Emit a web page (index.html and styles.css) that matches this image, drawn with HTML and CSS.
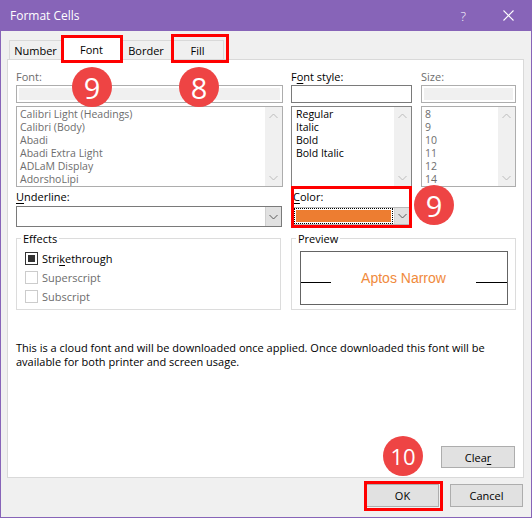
FILE: index.html
```html
<!DOCTYPE html>
<html>
<head>
<meta charset="utf-8">
<title>Format Cells</title>
<link rel="stylesheet" href="styles.css">
</head>
<body>
<div class="window">
  <div class="titlebar">
    <span class="title">Format Cells</span>
    <span class="tb-btns">
      <span class="help">?</span>
      <svg class="close" width="11" height="11" viewBox="0 0 11 11"><path d="M0.5 0.5 L10.5 10.5 M10.5 0.5 L0.5 10.5" stroke="#fff" stroke-width="1.1" fill="none"/></svg>
    </span>
  </div>
  <div class="client">
    <div class="tabs">
      <div class="tab t-number">Number</div>
      <div class="tab t-font active">Font</div>
      <div class="tab t-border">Border</div>
      <div class="tab t-fill">Fill</div>
    </div>
    <div class="panel">
      <div class="row row1">
        <div class="c-font">
          <div class="lbl dis">Font:</div>
          <div class="input dis"><div class="input-fill"></div></div>
          <div class="list dis">
            <div class="items">
              <div>Calibri Light (Headings)</div>
              <div>Calibri (Body)</div>
              <div>Abadi</div>
              <div>Abadi Extra Light</div>
              <div>ADLaM Display</div>
              <div>AdorshoLipi</div>
            </div>
            <div class="sb">
              <span class="arr"><svg width="9" height="6" viewBox="0 0 9 6"><path d="M0.5 5 L4.5 1 L8.5 5" stroke="currentColor" fill="none"/></svg></span>
              <span class="arr"><svg width="9" height="6" viewBox="0 0 9 6"><path d="M0.5 1 L4.5 5 L8.5 1" stroke="currentColor" fill="none"/></svg></span>
            </div>
          </div>
        </div>
        <div class="c-style">
          <div class="lbl">F<u>o</u>nt style:</div>
          <div class="input"></div>
          <div class="list">
            <div class="items">
              <div>Regular</div>
              <div>Italic</div>
              <div>Bold</div>
              <div>Bold Italic</div>
            </div>
            <div class="sb">
              <span class="arr"><svg width="9" height="6" viewBox="0 0 9 6"><path d="M0.5 5 L4.5 1 L8.5 5" stroke="currentColor" fill="none"/></svg></span>
              <span class="arr"><svg width="9" height="6" viewBox="0 0 9 6"><path d="M0.5 1 L4.5 5 L8.5 1" stroke="currentColor" fill="none"/></svg></span>
            </div>
          </div>
        </div>
        <div class="c-size">
          <div class="lbl dis">Size:</div>
          <div class="input dis"><div class="input-fill"></div></div>
          <div class="list dis">
            <div class="items">
              <div>8</div>
              <div>9</div>
              <div>10</div>
              <div>11</div>
              <div>12</div>
              <div>14</div>
            </div>
            <div class="sb">
              <span class="arr"><svg width="9" height="6" viewBox="0 0 9 6"><path d="M0.5 5 L4.5 1 L8.5 5" stroke="currentColor" fill="none"/></svg></span>
              <span class="arr"><svg width="9" height="6" viewBox="0 0 9 6"><path d="M0.5 1 L4.5 5 L8.5 1" stroke="currentColor" fill="none"/></svg></span>
            </div>
          </div>
        </div>
      </div>

      <div class="row row2">
        <div class="c-under">
          <div class="lbl"><u>U</u>nderline:</div>
          <div class="combo">
            <div class="combo-val"></div>
            <div class="dd"><svg width="9" height="6" viewBox="0 0 9 6"><path d="M0.5 1 L4.5 5 L8.5 1" stroke="currentColor" fill="none"/></svg></div>
          </div>
        </div>
        <div class="c-color">
          <div class="lbl"><u>C</u>olor:</div>
          <div class="combo color-combo">
            <div class="swatch-wrap"><div class="swatch"></div></div>
            <div class="dd"><svg width="9" height="6" viewBox="0 0 9 6"><path d="M0.5 1 L4.5 5 L8.5 1" stroke="currentColor" fill="none"/></svg></div>
          </div>
        </div>
      </div>

      <div class="row row3">
        <div class="group g-effects">
          <div class="g-title">Effects</div>
          <div class="checks">
            <div class="chk-row"><span class="chk on"><span class="mark"></span></span><span>Stri<u>k</u>ethrough</span></div>
            <div class="chk-row dis"><span class="chk"></span><span>Superscript</span></div>
            <div class="chk-row dis"><span class="chk"></span><span>Subscript</span></div>
          </div>
        </div>
        <div class="group g-preview">
          <div class="g-title">Preview</div>
          <div class="pv-box">
            <div class="pv-line"></div>
            <div class="pv-text">Aptos Narrow</div>
            <div class="pv-line"></div>
          </div>
        </div>
      </div>

      <p class="notice">This is a cloud font and will be downloaded once applied. Once downloaded this font will be<br>available for both printer and screen usage.</p>

      <div class="clear-row"><button class="btn btn-clear">Clea<u>r</u></button></div>
    </div>
    <div class="footer">
      <button class="btn">OK</button>
      <button class="btn">Cancel</button>
    </div>
  </div>

  <div class="ann box box-font"></div>
  <div class="ann box box-fill"></div>
  <div class="ann box box-color"></div>
  <div class="ann box box-ok"></div>
  <div class="ann num n1">9</div>
  <div class="ann num n2">8</div>
  <div class="ann num n3">9</div>
  <div class="ann num n4">10</div>
</div>
</body>
</html>
```

FILE: styles.css
```css
* { box-sizing: border-box; }
html, body { margin: 0; padding: 0; }
body {
  width: 532px;
  height: 518px;
  overflow: hidden;
  font-family: "Open Sans", "Noto Sans", sans-serif;
  font-size: 11px;
  color: #000;
  background: #f0f0f0;
}
u { text-decoration: underline; text-underline-offset: 2px; }

.window {
  position: relative;
  width: 532px;
  height: 518px;
  border: 1px solid #8764b8;
  border-top: 0;
  background: #f0f0f0;
  display: flex;
  flex-direction: column;
}

.titlebar {
  height: 31px;
  flex: none;
  background: #8764b8;
  color: #fff;
  display: flex;
  align-items: center;
  padding: 0 17px 0 9px;
}
.title { font-size: 12px; }
.tb-btns { margin-left: auto; display: flex; align-items: center; }
.help { font-size: 13px; margin-right: 37px; font-weight: 300; }
.close { display: block; }

.client {
  flex: 1;
  display: flex;
  flex-direction: column;
  padding: 5px 7px 0 6px;
}

.tabs {
  height: 23px;
  display: flex;
  align-items: flex-end;
  padding-left: 2px;
}
.tab {
  height: 19px;
  padding-top: 2px;
  line-height: 15px;
  text-align: center;
  border: 1px solid #d9d9d9;
  border-bottom: 0;
  background: #f0f0f0;
}
.tab + .tab { border-left: 0; }
.t-number { width: 53px; }
.t-font { width: 59px; }
.t-border { width: 51px; }
.t-fill { width: 52px; }
.tab.active {
  position: relative;
  z-index: 1;
  height: 24px;
  margin-bottom: -1px;
  padding-top: 5px;
  background: #fff;
  border-left: 1px solid #d9d9d9;
}
.tab.active + .tab { border-left: 0; }

.panel {
  flex: none;
  height: 419px;
  background: #fff;
  border: 1px solid #d9d9d9;
  padding: 9px 7px 9px 8px;
  display: flex;
  flex-direction: column;
}

.row { display: flex; }
.lbl { height: 15px; line-height: 15px; white-space: nowrap; }
.dis { color: #6d6d6d; }

.c-font { width: 267px; }
.c-style { width: 121px; margin-left: 8px; }
.c-size { width: 95px; margin-left: 9px; }

.input {
  height: 18px;
  margin-top: 1px;
  border: 1px solid #7a7a7a;
  background: #fff;
}
.input.dis { border-color: #adadad; padding: 2px; }
.input-fill { height: 100%; background: #f0f0f0; }

.list {
  height: 81px;
  margin-top: 3px;
  border: 1px solid #828282;
  display: flex;
  font-size: 10.5px;
  line-height: 13px;
}
.list.dis { border-color: #adadad; }
.items { flex: 1; padding: 1px 0 0 3px; white-space: nowrap; overflow: hidden; }
.c-style .items { padding-left: 4px; }
.sb {
  width: 17px;
  background: #f0f0f0;
  display: flex;
  flex-direction: column;
  justify-content: space-between;
  color: #bcbcbc;
}
.arr {
  height: 17px;
  display: flex;
  align-items: center;
  justify-content: center;
}
.arr svg { display: block; }

.row2 { margin-top: 2px; }
.c-under { width: 266px; }
.c-color { width: 119px; margin-left: 9px; padding-left: 2px; }
.combo {
  margin-top: 2px;
  height: 21px;
  border: 1px solid #7a7a7a;
  background: #fff;
  display: flex;
}
.combo-val { flex: 1; }
.dd {
  width: 16px;
  background: #e1e1e1;
  border-left: 1px solid #cfcfcf;
  display: flex;
  align-items: center;
  justify-content: center;
  color: #5a5a5a;
}
.dd svg { display: block; }
.color-combo {
  margin-top: 3px;
  height: 18px;
  border-color: #b9b9b9;
}
.swatch-wrap {
  flex: 1;
  border: 1px dotted #000;
  padding: 1px;
  margin-right: 1px;
}
.swatch { height: 100%; background: #ed7d31; }
.color-combo .dd { width: 15px; border-left: 1px solid #d4d4d4; }

.row3 { margin-top: 11px; }
.group {
  height: 72px;
  border: 1px solid #dcdcdc;
}
.g-effects { width: 265px; }
.g-preview { width: 225px; margin-left: 10px; }
.g-title {
  margin: -8px 0 0 4px;
  width: max-content;
  padding: 0 2px;
  background: #fff;
  height: 15px;
  line-height: 15px;
}
.checks { margin-top: 3px; padding-left: 8px; }
.chk-row { height: 19px; display: flex; align-items: center; }
.chk-row.dis { color: #6d6d6d; }
.chk {
  width: 13px;
  height: 13px;
  border: 1px solid #cccccc;
  margin-right: 4px;
  display: flex;
  align-items: center;
  justify-content: center;
  background: #fff;
}
.chk.on { border-color: #333; }
.mark { width: 7px; height: 7px; background: #333; }

.pv-box {
  margin: 5px 7px 0 8px;
  height: 54px;
  border: 1px solid #646464;
  display: grid;
  grid-template-columns: 30px 1fr 31px;
  align-items: start;
}
.pv-line { height: 1px; background: #000; margin-top: 30px; }
.pv-text {
  margin-top: 18px;
  text-align: center;
  font-family: "Liberation Sans", Arial, sans-serif;
  font-size: 14px;
  line-height: 16px;
  color: #f08a3c;
}

.notice {
  margin: 31px 0 0 0;
  line-height: 14px;
  white-space: nowrap;
}

.clear-row { margin-top: auto; display: flex; justify-content: flex-end; padding-right: 1px; }

.btn {
  font: inherit;
  color: #000;
  width: 73px;
  height: 23px;
  padding: 0;
  background: #e1e1e1;
  border: 1px solid #adadad;
  border-radius: 0;
}
.btn-clear { width: 74px; height: 22px; }

.footer {
  margin-top: 6px;
  display: flex;
  justify-content: flex-end;
  gap: 11px;
  padding-right: 1px;
}

/* annotations overlay */
.ann { position: absolute; z-index: 5; }
.box { border: 3px solid #f00; }
.box-font { left: 60px; top: 35px; width: 62px; height: 28px; }
.box-fill { left: 170px; top: 34px; width: 58px; height: 29px; }
.box-color { left: 290px; top: 186px; width: 121px; height: 42px; }
.box-ok { left: 363px; top: 481px; width: 79px; height: 30px; }
.num {
  width: 40px;
  height: 40px;
  border-radius: 50%;
  background: #ee4444;
  color: #fff;
  display: flex;
  align-items: center;
  justify-content: center;
  font-family: "Open Sans", sans-serif;
  font-weight: 500;
  font-size: 29px;
  line-height: 1;
}
.n1 { left: 71px; top: 67px; }
.n2 { left: 178px; top: 67px; }
.n3 { left: 413px; top: 185px; }
.n4 { left: 382px; top: 436px; font-size: 22px; }
```
